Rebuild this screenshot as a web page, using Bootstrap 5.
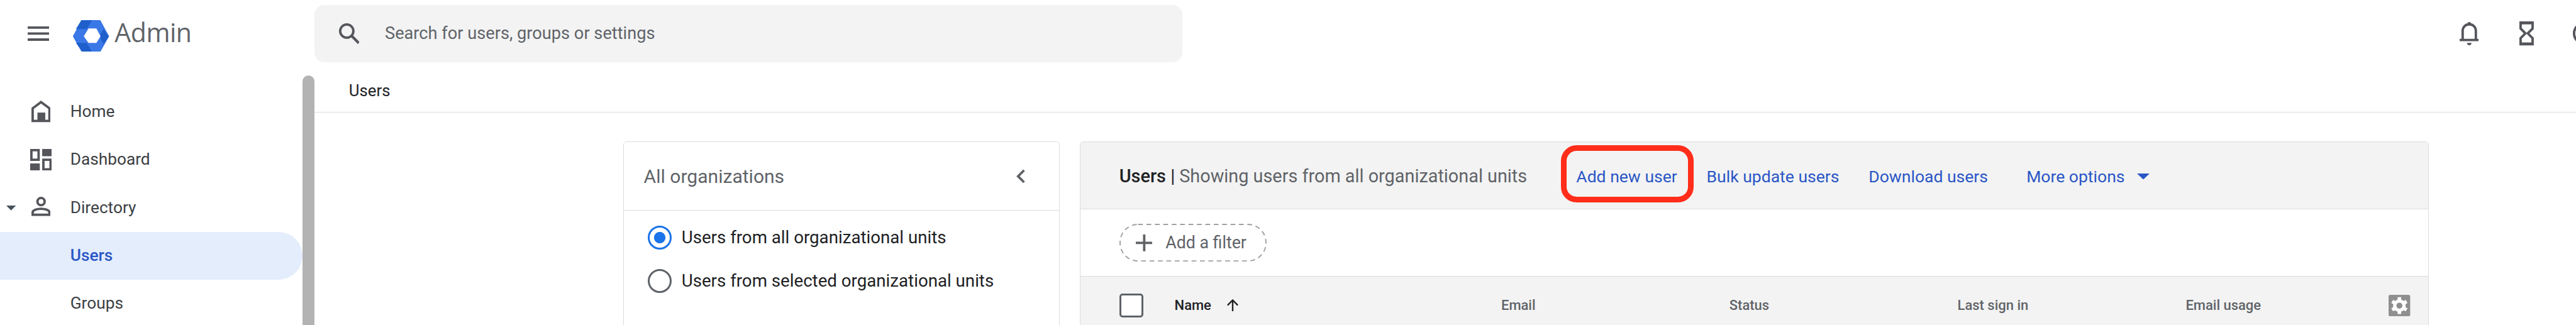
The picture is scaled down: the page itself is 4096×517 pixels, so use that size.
<!DOCTYPE html>
<html lang="en"><head><meta charset="utf-8"><title>Users</title>
<link href="https://cdn.jsdelivr.net/npm/bootstrap@5.3.0/dist/css/bootstrap.min.css" rel="stylesheet">
<style>
html,body{height:100%;overflow:hidden;background:#fff}
body{zoom:.9548;font-family:Roboto,"Liberation Sans",sans-serif;color:#3c4043}
.shell{width:4290px;height:542px;overflow:hidden}
.topbar{height:118px}
.brandzone{width:524px;height:112px;padding-left:46px;flex:none}
.burger{width:36px;height:24px;margin-right:40px;flex:none}
.brandlogo{width:60px;height:53px;margin:7px 9px 0 0;flex:none}
.brandname{font-size:43px;line-height:1;color:#5f6368;font-family:"Open Sans",Roboto,sans-serif;letter-spacing:-.5px;margin-bottom:4px}
.searchbox{width:1445px;height:96px;background:#f3f3f3;border-radius:16px;padding-left:40px;margin-top:8px;flex:none}
.searchbox svg{width:34px;height:34px;margin-right:43px;flex:none}
.searchbox span{font-size:28.5px;color:#5f6368}
.rightzone{height:112px}
.sidezone{width:524px;flex:none}
.sidenav{width:504px;padding-top:28px;flex:none}
.navrow{height:80px;font-size:27.5px;color:#3c4043;padding-left:117px;position:relative;white-space:nowrap}
.navrow svg{position:absolute;left:52px;top:22px}
.navrow .caret{position:absolute;left:10px;top:37px;width:16px;height:8px}
.navrow.on{background:#e3edfc;color:#2a56c6;font-weight:500;border-radius:0 40px 40px 0}
.thumb{width:20px;margin-top:8px;background:#b3b3b3;border-radius:10px 10px 0 0;flex:none}
.crumb{height:70px;border-bottom:2px solid #dcdcdc;padding-left:57px;font-size:27px;color:#202124;padding-bottom:2px}
.stage{padding:48px 0 0 514px;gap:33px}
.orgcard{width:727px;height:400px;border:2px solid #dcdcdc;border-radius:6px;flex:none}
.orghead{height:114px;border-bottom:2px solid #dcdcdc;padding:0 56px 0 33px;font-size:31.5px;color:#5f6368;background:#fff;border-radius:6px 6px 0 0}
.orgbody{padding:9px 0 0 40px}
.opt{height:72px;margin:0;padding:0;gap:16px;font-size:29px;color:#202124}
.opt .form-check-input{width:40px;height:40px;margin:0;border:4px solid #5f6368;float:none;background:#fff;flex:none}
.opt .form-check-input:checked{border-color:#1a73e8;background:radial-gradient(circle,#1a73e8 0 9px,#fff 10px)}
.usercard{width:2247px;height:400px;border:2px solid #dcdcdc;border-radius:6px;flex:none}
.userhead{height:112px;background:#f3f3f3;border-bottom:2px solid #dcdcdc;padding:3px 0 0 65px;border-radius:6px 6px 0 0;white-space:nowrap;font-size:30.2px;position:relative}
.userhead b{font-weight:500;color:#202124;width:78px;flex:none}
.userhead .sep{color:#202124;width:22px;flex:none;text-align:center}
.userhead .sub{color:#5f6368;width:661px;flex:none}
.lnk{color:#2a56c6;text-decoration:none;font-size:27.8px}
.redbox{border:10px solid #ff2d1a;border-radius:26px;height:95px;width:221px;position:absolute;left:800px;top:5px}
.filterrow{height:112px;border-bottom:2px solid #dcdcdc;padding-left:65px}
.filterpill{width:245px;height:63px;position:relative;padding-left:27px;gap:22px;font-size:28px;color:#5f6368}
.dashes{position:absolute;left:0;top:0}
.colhead{height:120px;background:#f3f3f3;font-size:23px;font-weight:500;color:#5f6368;white-space:nowrap;padding-bottom:24px;padding-left:65px}
.tick{width:40px;height:40px;border:4px solid #5f6368;border-radius:5px;background:#fff;flex:none;margin-right:52px}
.cn{color:#202124;width:544px;flex:none}
.cl{width:380px;flex:none}
.cu{width:338px;flex:none}
</style></head><body>
<div class="shell d-flex flex-column">
 <header class="topbar d-flex align-items-start flex-shrink-0">
  <div class="brandzone d-flex align-items-center">
   <svg class="burger" viewBox="0 0 36 24"><path fill="#54565b" d="M0 0h36v4H0zM0 10h36v4H0zM0 20h36v4H0z"/></svg>
   <svg class="brandlogo" viewBox="0 0 60 53">
    <path fill="#3b78e7" stroke="#3b78e7" stroke-width="2" stroke-linejoin="round" d="M15 1h30l14 26-14 25H15L1 27z"/>
    <path fill="#1f5fcb" d="M14 0h18l-9 15H5zM5 38h18l9 15H16zM44 27l7-12 9 12-9 13z"/>
    <path fill="#fff" d="M26 14h13l7 13-7 11H26l-8-11z"/>
   </svg>
   <span class="brandname">Admin</span>
  </div>
  <div class="searchbox d-flex align-items-center">
   <svg viewBox="0 0 34 34"><circle cx="13" cy="13" r="11" fill="none" stroke="#54565b" stroke-width="4"/><path d="M21 21l12 12" stroke="#54565b" stroke-width="4.500" fill="none"/></svg>
   <span>Search for users, groups or settings</span>
  </div>
  <div class="rightzone ms-auto d-flex align-items-center">
   <svg width="32" height="40" viewBox="0 0 32 40"><path fill="none" stroke="#54565b" stroke-width="4" d="M5 31V16C5 9 10 5 16 5s11 4 11 11v15"/><path fill="#54565b" d="M0 29h32v4H0zM13 4a3 3 0 0 1 6 0v2h-6zM12 36h8q-1 4-4 4t-4-4z"/></svg>
   <svg width="24" height="40" viewBox="0 0 24 40" style="margin-left:68px"><path fill="none" stroke="#54565b" stroke-width="4" d="M2 2h20v10l-8 8 8 8v10H2V28l8-8-8-8z"/><path fill="#54565b" d="M2 2h20v3H2zM2 35h20v3H2z"/></svg>
   <svg width="6" height="40" viewBox="0 0 6 40" style="margin-left:64px"><circle cx="20" cy="20" r="17" fill="none" stroke="#54565b" stroke-width="4"/></svg>
  </div>
 </header>
 <div class="d-flex flex-grow-1 overflow-hidden">
  <aside class="sidezone d-flex">
   <nav class="sidenav">
    <div class="navrow d-flex align-items-center"><svg width="32" height="36" viewBox="0 0 32 36"><path fill="#54565b" fill-rule="evenodd" d="M16 0l16 12v24H0V12zM16 5L4 14v18h24V14z"/><path fill="#54565b" d="M10 20h13v13H10z"/></svg>Home</div>
    <div class="navrow d-flex align-items-center"><svg width="36" height="36" viewBox="0 0 36 36" style="left:50px"><path fill="#54565b" fill-rule="evenodd" d="M0 0h16v20H0zM4 4v12h8V4z"/><path fill="#54565b" d="M20 0h16v12H20zM0 24h16v12H0z"/><path fill="#54565b" fill-rule="evenodd" d="M20 16h16v20H20zM24 20v12h8V20z"/></svg>Dashboard</div>
    <div class="navrow d-flex align-items-center"><svg class="caret" viewBox="0 0 16 8"><path fill="#45525b" d="M0 0h16L8 8z"/></svg><svg width="32" height="32" viewBox="0 0 32 32"><circle cx="16" cy="8" r="6" fill="none" stroke="#54565b" stroke-width="4"/><path fill="none" stroke="#54565b" stroke-width="4" d="M2 30v-4c0-4 8-6 14-6s14 2 14 6v4"/><path fill="#54565b" d="M0 28h32v4H0z"/></svg>Directory</div>
    <div class="navrow on d-flex align-items-center">Users</div>
    <div class="navrow d-flex align-items-center">Groups</div>
   </nav>
   <div class="thumb"></div>
  </aside>
  <main class="flex-grow-1 overflow-hidden">
   <div class="crumb d-flex align-items-center">Users</div>
   <div class="stage d-flex">
    <section class="orgcard">
     <div class="orghead d-flex align-items-center justify-content-between"><span>All organizations</span>
      <svg width="16" height="24" viewBox="0 0 16 24"><path fill="none" stroke="#5f6368" stroke-width="4" d="M14 2L4 12l10 10"/></svg></div>
     <div class="orgbody">
      <label class="form-check opt d-flex align-items-center"><input class="form-check-input" type="radio" name="ou" checked>Users from all organizational units</label>
      <label class="form-check opt d-flex align-items-center"><input class="form-check-input" type="radio" name="ou">Users from selected organizational units</label>
     </div>
    </section>
    <section class="usercard">
     <div class="userhead d-flex align-items-center">
      <b>Users</b><span class="sep">|</span><span class="sub">Showing users from all organizational units</span>
      <a class="lnk" href="#">Add new user</a>
      <a class="lnk" href="#" style="margin-left:49px">Bulk update users</a>
      <a class="lnk" href="#" style="margin-left:49px">Download users</a>
      <a class="lnk" href="#" style="margin-left:64px">More options</a>
      <svg width="21" height="10" viewBox="0 0 21 10" style="margin-left:20px"><path fill="#2a56c6" d="M0 0h21L10.500 10z"/></svg>
      <div class="redbox"></div>
     </div>
     <div class="filterrow d-flex align-items-center">
      <div class="filterpill d-flex align-items-center"><svg class="dashes" width="245" height="63" viewBox="0 0 245 63"><rect x="1" y="1" width="243" height="61" rx="30" fill="none" stroke="#a0a0a0" stroke-width="2" stroke-dasharray="8 6"/></svg><svg width="28" height="28" viewBox="0 0 28 28"><path fill="#5f6368" d="M12 0h4v12h12v4H16v12h-4V16H0v-4h12z"/></svg>Add a filter</div>
     </div>
     <div class="colhead d-flex align-items-center">
      <span class="tick"></span>
      <span class="cn d-flex align-items-center">Name<svg width="21" height="20" viewBox="0 0 21 20" style="margin-left:25px"><path fill="none" stroke="#202124" stroke-width="2.500" d="M10.500 20V2M2 10l8.500-8.500L19 10"/></svg></span>
      <span class="cl">Email</span><span class="cl">Status</span><span class="cl">Last sign in</span><span class="cu">Email usage</span>
      <svg width="36" height="36" viewBox="0 0 36 36"><rect width="36" height="36" rx="3" fill="#8f8f8f"/><g stroke="#fff" stroke-width="6"><path d="M18 4v28M6 11l24 14M6 25l24-14"/></g><circle cx="18" cy="18" r="10.500" fill="#fff"/><circle cx="18" cy="18" r="5" fill="#8f8f8f"/></svg>
     </div>
    </section>
   </div>
  </main>
 </div>
</div>
<script src="https://cdn.jsdelivr.net/npm/bootstrap@5.3.0/dist/js/bootstrap.bundle.min.js"></script>
</body></html>
